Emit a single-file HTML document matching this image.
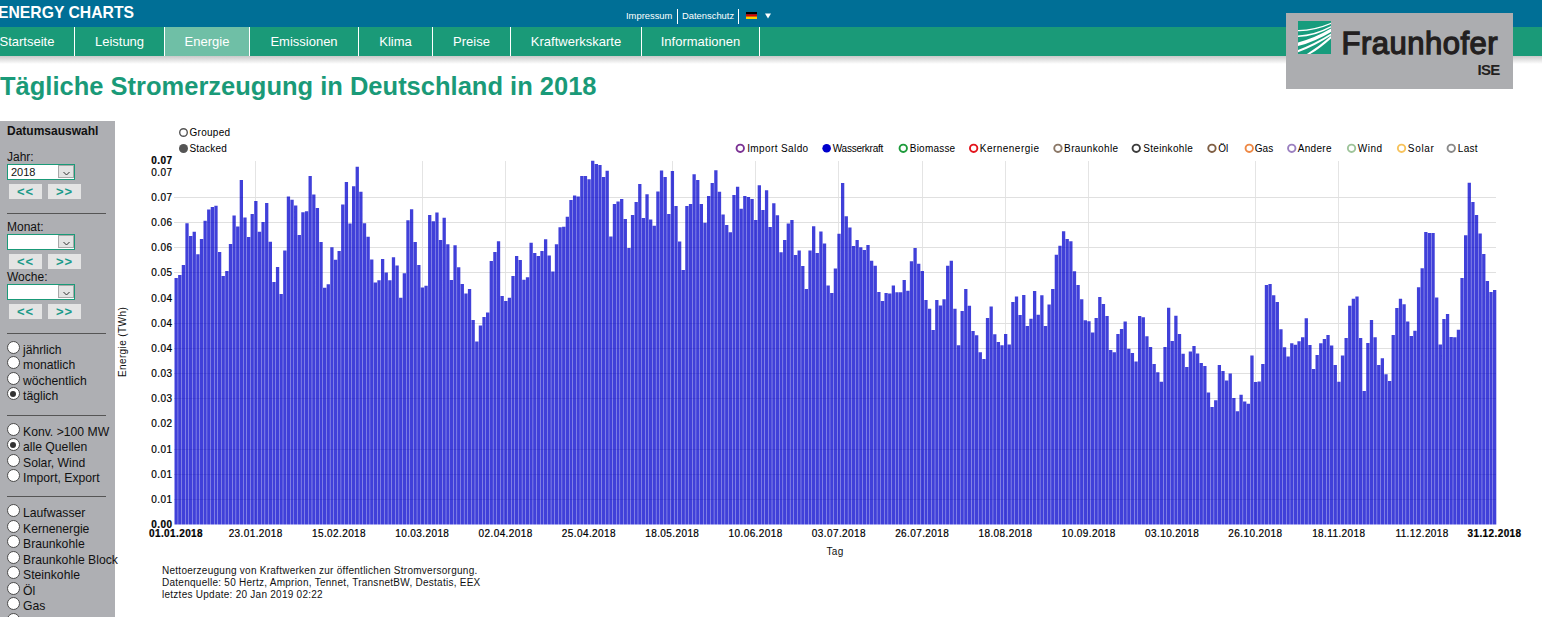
<!DOCTYPE html>
<html><head><meta charset="utf-8">
<style>
*{margin:0;padding:0;box-sizing:border-box;}
html,body{width:1542px;height:617px;overflow:hidden;background:#fff;font-family:"Liberation Sans",sans-serif;}
#top{position:absolute;left:0;top:0;width:1542px;height:27px;background:#006f96;}
#brand{position:absolute;left:-1.8px;top:3px;color:#fff;font-weight:bold;font-size:17px;letter-spacing:0px;transform:scaleX(0.925);transform-origin:0 0;line-height:20px;white-space:nowrap;}
.tl{position:absolute;top:10px;color:#fff;font-size:9.4px;line-height:12px;white-space:nowrap;}
.tsep{position:absolute;top:9px;width:1px;height:15px;background:#fff;}
#nav{position:absolute;left:0;top:27px;width:1542px;height:29px;background:#1a9a78;}
#shadow{position:absolute;left:0;top:56px;width:1542px;height:8px;background:linear-gradient(#c9c9c9,#fff);}
.ni{position:absolute;top:0;height:29px;color:#fff;font-size:13px;line-height:29px;text-align:center;white-space:nowrap;}
.ns{position:absolute;top:0;width:1px;height:29px;background:#fff;}
#logo{position:absolute;left:1286px;top:13px;width:227px;height:76px;background:#acadb0;}
#title{position:absolute;left:0;top:71px;color:#1a9a78;font-weight:bold;font-size:25.5px;line-height:30px;white-space:nowrap;}
#side{position:absolute;left:0;top:121px;width:115px;height:500px;background:#aeafb3;}
.st{position:absolute;left:7px;color:#111;font-size:12px;line-height:14px;white-space:nowrap;}
.sel{position:absolute;left:7px;width:68px;height:16px;background:#fff;border:1.3px solid #1a9a78;}
.sv{position:absolute;left:3px;top:1px;font-size:11px;line-height:13px;color:#111;}
.sbtn{position:absolute;right:0px;top:0.3px;width:16.5px;height:13px;background:#e3e3e3;border:1px solid #a8a8a8;}
.sbtn svg{position:absolute;left:0;top:0;}
.bt{position:absolute;width:33px;height:15px;background:#e4e4e4;color:#1a9a8a;font-size:13px;font-weight:bold;line-height:15px;text-align:center;letter-spacing:1px;}
.hr{position:absolute;left:7px;width:99px;height:1px;background:#555;}
.rb{position:absolute;left:7px;width:13px;height:13px;border-radius:50%;background:#fff;border:1.2px solid #4a4a4a;}
.dot{position:absolute;left:2.3px;top:2.3px;width:6.2px;height:6.2px;border-radius:50%;background:#333;}
.rt{position:absolute;left:23px;color:#111;font-size:12.2px;line-height:14px;white-space:nowrap;}
.yl{position:absolute;left:121px;width:51.4px;text-align:right;letter-spacing:0.4px;font-size:10px;line-height:12px;color:#000;-webkit-text-stroke:0.2px #000;}
.xl{position:absolute;top:527.5px;width:80px;text-align:center;letter-spacing:0.4px;font-size:10px;line-height:12px;color:#000;-webkit-text-stroke:0.2px #000;}
.lg{position:absolute;top:143px;font-size:10px;line-height:12px;color:#000;white-space:nowrap;}
.ft{position:absolute;left:162px;letter-spacing:0.26px;font-size:10px;line-height:12px;color:#111;white-space:nowrap;}
</style></head><body>
<div id="top">
<div id="brand">ENERGY CHARTS</div>
<div class="tl" style="left:626px;">Impressum</div>
<div class="tsep" style="left:677px;"></div>
<div class="tl" style="left:682px;">Datenschutz</div>
<div class="tsep" style="left:738px;"></div>
<svg style="position:absolute;left:746px;top:12px;" width="11" height="7"><rect width="11" height="2.4" fill="#000"/><rect y="2.3" width="11" height="2.4" fill="#dd0000"/><rect y="4.6" width="11" height="2.4" fill="#ffce00"/></svg>
<svg style="position:absolute;left:764px;top:12px;" width="8" height="7"><path d="M1 1.5h6l-3 5z" fill="#fff"/></svg>
</div>
<div id="nav"><div class="ni" style="left:-20px;width:94px;">Startseite</div><div class="ns" style="left:74px;"></div><div class="ni" style="left:75px;width:89px;">Leistung</div><div class="ns" style="left:164px;"></div><div class="ni" style="left:165px;width:84px;background:#6fbfa6;">Energie</div><div class="ns" style="left:249px;"></div><div class="ni" style="left:250px;width:108px;">Emissionen</div><div class="ns" style="left:358px;"></div><div class="ni" style="left:359px;width:73px;">Klima</div><div class="ns" style="left:432px;"></div><div class="ni" style="left:433px;width:77px;">Preise</div><div class="ns" style="left:510px;"></div><div class="ni" style="left:511px;width:130px;">Kraftwerkskarte</div><div class="ns" style="left:641px;"></div><div class="ni" style="left:642px;width:117px;">Informationen</div><div class="ns" style="left:759px;"></div></div>
<div id="shadow"></div>
<div id="logo">
<svg style="position:absolute;left:12px;top:8px;" width="33" height="33" viewBox="0 0 33 33">
<rect width="33" height="33" fill="#179c7d"/>
<path d="M0 8.9 Q16 9 33 1.8 L33 3.1 Q16 10.5 0 10.2Z M0 14.6 Q17 13.5 33 5 L33 6.5 Q17 15.5 0 16.1Z M0 21.6 Q17 17 33 7.6 L33 10.9 Q17 20.5 0 25.1Z M0 29 Q17 22.5 33 12.5 L33 14.5 Q17 25 0 31.3Z M8.9 33 Q21 25.5 33 15.1 L33 17.4 Q22 27.5 12.2 33Z" fill="#fff"/>
</svg>
<div style="position:absolute;left:55.5px;top:12.5px;font-size:31px;font-weight:normal;-webkit-text-stroke:1.3px #231f20;color:#231f20;line-height:36px;letter-spacing:0.5px;">Fraunhofer</div>
<div style="position:absolute;left:191.5px;top:48px;font-size:15px;font-weight:bold;color:#231f20;line-height:18px;letter-spacing:-0.7px;">ISE</div>
</div>
<div id="title">Tägliche Stromerzeugung in Deutschland in 2018</div>
<div id="side">
<div class="st" style="top:3px;font-weight:bold;">Datumsauswahl</div>
<div class="st" style="top:29px;">Jahr:</div>
</div>
<div style="position:absolute;left:0;top:0;">
<div class="sel" style="top:164px;"><span class="sv">2018</span><div class="sbtn"><svg width="15" height="11" viewBox="0 0 15 11"><path d="M4.5 6l3 3 3-3" fill="none" stroke="#333" stroke-width="1"/></svg></div></div><div class="bt" style="top:184px;left:9px;">&lt;&lt;</div><div class="bt" style="top:184px;left:48px;">&gt;&gt;</div>
<div class="hr" style="top:213px;"></div>
<div class="st" style="top:219.8px;">Monat:</div>
<div class="sel" style="top:234px;"><span class="sv"></span><div class="sbtn"><svg width="15" height="11" viewBox="0 0 15 11"><path d="M4.5 6l3 3 3-3" fill="none" stroke="#333" stroke-width="1"/></svg></div></div><div class="bt" style="top:254px;left:9px;">&lt;&lt;</div><div class="bt" style="top:254px;left:48px;">&gt;&gt;</div>
<div class="st" style="top:269.8px;">Woche:</div>
<div class="sel" style="top:284px;"><span class="sv"></span><div class="sbtn"><svg width="15" height="11" viewBox="0 0 15 11"><path d="M4.5 6l3 3 3-3" fill="none" stroke="#333" stroke-width="1"/></svg></div></div><div class="bt" style="top:304px;left:9px;">&lt;&lt;</div><div class="bt" style="top:304px;left:48px;">&gt;&gt;</div>
<div class="hr" style="top:333px;"></div>
<div class="hr" style="top:415px;"></div>
<div class="hr" style="top:496px;"></div>
<div class="rb" style="top:341.0px;"></div><div class="rt" style="top:343.0px;">jährlich</div><div class="rb" style="top:356.4px;"></div><div class="rt" style="top:358.4px;">monatlich</div><div class="rb" style="top:371.9px;"></div><div class="rt" style="top:373.9px;">wöchentlich</div><div class="rb" style="top:387.4px;"><span class="dot"></span></div><div class="rt" style="top:389.4px;">täglich</div><div class="rb" style="top:422.9px;"></div><div class="rt" style="top:424.9px;">Konv. &gt;100 MW</div><div class="rb" style="top:438.3px;"><span class="dot"></span></div><div class="rt" style="top:440.3px;">alle Quellen</div><div class="rb" style="top:453.8px;"></div><div class="rt" style="top:455.8px;">Solar, Wind</div><div class="rb" style="top:469.2px;"></div><div class="rt" style="top:471.2px;">Import, Export</div><div class="rb" style="top:504.4px;"></div><div class="rt" style="top:506.4px;">Laufwasser</div><div class="rb" style="top:519.9px;"></div><div class="rt" style="top:521.9px;">Kernenergie</div><div class="rb" style="top:535.3px;"></div><div class="rt" style="top:537.3px;">Braunkohle</div><div class="rb" style="top:550.8px;"></div><div class="rt" style="top:552.8px;">Braunkohle Block</div><div class="rb" style="top:566.2px;"></div><div class="rt" style="top:568.2px;">Steinkohle</div><div class="rb" style="top:581.6px;"></div><div class="rt" style="top:583.6px;">Öl</div><div class="rb" style="top:597.1px;"></div><div class="rt" style="top:599.1px;">Gas</div><div class="rb" style="top:612.5px;"></div><div class="rt" style="top:614.5px;">Müll</div>
</div>
<svg style="position:absolute;left:0;top:0;" width="1542" height="617">
<path d="M255.5 161V524M422.5 161V524M505.5 161V524M672.5 161V524M755.5 161V524M838.5 161V524M922.5 161V524M1005.5 161V524M1088.5 161V524M1255.5 161V524M1338.5 161V524" stroke="#e4e4e4" stroke-width="1" fill="none"/>
<path d="M174.0 499.5H1496.0M174.0 474.5H1496.0M174.0 449.5H1496.0M174.0 398.5H1496.0M174.0 373.5H1496.0M174.0 348.5H1496.0M174.0 323.5H1496.0M174.0 272.5H1496.0M174.0 247.5H1496.0M174.0 222.5H1496.0M174.0 197.5H1496.0" stroke="#e0e0e0" stroke-width="1" fill="none"/>
<path d="M174.50 278.0h3.30V524.5h-3.30zM178.12 275.0h3.30V524.5h-3.30zM181.74 265.0h3.30V524.5h-3.30zM185.37 223.3h3.30V524.5h-3.30zM188.99 236.1h3.30V524.5h-3.30zM192.61 231.7h3.30V524.5h-3.30zM196.23 254.3h3.30V524.5h-3.30zM199.86 239.0h3.30V524.5h-3.30zM203.48 220.7h3.30V524.5h-3.30zM207.10 209.5h3.30V524.5h-3.30zM210.72 207.1h3.30V524.5h-3.30zM214.34 205.7h3.30V524.5h-3.30zM217.97 252.0h3.30V524.5h-3.30zM221.59 276.0h3.30V524.5h-3.30zM225.21 271.1h3.30V524.5h-3.30zM228.83 244.0h3.30V524.5h-3.30zM232.46 215.4h3.30V524.5h-3.30zM236.08 226.5h3.30V524.5h-3.30zM239.70 180.1h3.30V524.5h-3.30zM243.32 217.5h3.30V524.5h-3.30zM246.95 236.9h3.30V524.5h-3.30zM250.57 214.0h3.30V524.5h-3.30zM254.19 200.9h3.30V524.5h-3.30zM257.81 231.7h3.30V524.5h-3.30zM261.43 222.0h3.30V524.5h-3.30zM265.06 203.1h3.30V524.5h-3.30zM268.68 241.7h3.30V524.5h-3.30zM272.30 281.9h3.30V524.5h-3.30zM275.92 267.0h3.30V524.5h-3.30zM279.55 294.0h3.30V524.5h-3.30zM283.17 250.5h3.30V524.5h-3.30zM286.79 196.6h3.30V524.5h-3.30zM290.41 199.7h3.30V524.5h-3.30zM294.03 205.5h3.30V524.5h-3.30zM297.66 235.0h3.30V524.5h-3.30zM301.28 212.3h3.30V524.5h-3.30zM304.90 211.2h3.30V524.5h-3.30zM308.52 176.0h3.30V524.5h-3.30zM312.15 194.6h3.30V524.5h-3.30zM315.77 208.0h3.30V524.5h-3.30zM319.39 242.0h3.30V524.5h-3.30zM323.01 287.7h3.30V524.5h-3.30zM326.63 284.2h3.30V524.5h-3.30zM330.26 247.3h3.30V524.5h-3.30zM333.88 259.8h3.30V524.5h-3.30zM337.50 251.0h3.30V524.5h-3.30zM341.12 204.5h3.30V524.5h-3.30zM344.75 182.0h3.30V524.5h-3.30zM348.37 223.6h3.30V524.5h-3.30zM351.99 186.2h3.30V524.5h-3.30zM355.61 166.7h3.30V524.5h-3.30zM359.23 191.8h3.30V524.5h-3.30zM362.86 223.3h3.30V524.5h-3.30zM366.48 236.8h3.30V524.5h-3.30zM370.10 259.4h3.30V524.5h-3.30zM373.72 282.5h3.30V524.5h-3.30zM377.35 280.3h3.30V524.5h-3.30zM380.97 258.9h3.30V524.5h-3.30zM384.59 272.4h3.30V524.5h-3.30zM388.21 280.3h3.30V524.5h-3.30zM391.84 257.2h3.30V524.5h-3.30zM395.46 265.4h3.30V524.5h-3.30zM399.08 297.7h3.30V524.5h-3.30zM402.70 273.2h3.30V524.5h-3.30zM406.32 220.3h3.30V524.5h-3.30zM409.95 209.3h3.30V524.5h-3.30zM413.57 242.1h3.30V524.5h-3.30zM417.19 265.0h3.30V524.5h-3.30zM420.81 287.5h3.30V524.5h-3.30zM424.44 285.8h3.30V524.5h-3.30zM428.06 215.1h3.30V524.5h-3.30zM431.68 221.2h3.30V524.5h-3.30zM435.30 212.5h3.30V524.5h-3.30zM438.92 240.1h3.30V524.5h-3.30zM442.55 217.7h3.30V524.5h-3.30zM446.17 244.3h3.30V524.5h-3.30zM449.79 280.0h3.30V524.5h-3.30zM453.41 245.3h3.30V524.5h-3.30zM457.04 267.2h3.30V524.5h-3.30zM460.66 284.1h3.30V524.5h-3.30zM464.28 293.6h3.30V524.5h-3.30zM467.90 289.0h3.30V524.5h-3.30zM471.52 320.1h3.30V524.5h-3.30zM475.15 341.5h3.30V524.5h-3.30zM478.77 325.6h3.30V524.5h-3.30zM482.39 316.9h3.30V524.5h-3.30zM486.01 312.6h3.30V524.5h-3.30zM489.64 261.1h3.30V524.5h-3.30zM493.26 252.0h3.30V524.5h-3.30zM496.88 241.3h3.30V524.5h-3.30zM500.50 296.1h3.30V524.5h-3.30zM504.12 301.1h3.30V524.5h-3.30zM507.75 297.7h3.30V524.5h-3.30zM511.37 276.0h3.30V524.5h-3.30zM514.99 255.9h3.30V524.5h-3.30zM518.61 260.1h3.30V524.5h-3.30zM522.24 279.7h3.30V524.5h-3.30zM525.86 277.3h3.30V524.5h-3.30zM529.48 242.7h3.30V524.5h-3.30zM533.10 253.1h3.30V524.5h-3.30zM536.73 255.9h3.30V524.5h-3.30zM540.35 251.0h3.30V524.5h-3.30zM543.97 239.3h3.30V524.5h-3.30zM547.59 255.5h3.30V524.5h-3.30zM551.21 271.5h3.30V524.5h-3.30zM554.84 244.3h3.30V524.5h-3.30zM558.46 227.2h3.30V524.5h-3.30zM562.08 226.8h3.30V524.5h-3.30zM565.70 216.8h3.30V524.5h-3.30zM569.33 200.0h3.30V524.5h-3.30zM572.95 195.5h3.30V524.5h-3.30zM576.57 196.5h3.30V524.5h-3.30zM580.19 176.0h3.30V524.5h-3.30zM583.81 176.0h3.30V524.5h-3.30zM587.44 179.3h3.30V524.5h-3.30zM591.06 160.8h3.30V524.5h-3.30zM594.68 164.1h3.30V524.5h-3.30zM598.30 165.0h3.30V524.5h-3.30zM601.93 177.0h3.30V524.5h-3.30zM605.55 170.8h3.30V524.5h-3.30zM609.17 236.4h3.30V524.5h-3.30zM612.79 204.0h3.30V524.5h-3.30zM616.41 201.4h3.30V524.5h-3.30zM620.04 199.1h3.30V524.5h-3.30zM623.66 219.0h3.30V524.5h-3.30zM627.28 248.1h3.30V524.5h-3.30zM630.90 214.9h3.30V524.5h-3.30zM634.53 202.0h3.30V524.5h-3.30zM638.15 183.9h3.30V524.5h-3.30zM641.77 217.9h3.30V524.5h-3.30zM645.39 194.2h3.30V524.5h-3.30zM649.02 219.6h3.30V524.5h-3.30zM652.64 225.7h3.30V524.5h-3.30zM656.26 191.6h3.30V524.5h-3.30zM659.88 170.6h3.30V524.5h-3.30zM663.50 177.0h3.30V524.5h-3.30zM667.13 214.0h3.30V524.5h-3.30zM670.75 171.0h3.30V524.5h-3.30zM674.37 206.0h3.30V524.5h-3.30zM677.99 241.5h3.30V524.5h-3.30zM681.62 270.1h3.30V524.5h-3.30zM685.24 206.0h3.30V524.5h-3.30zM688.86 204.0h3.30V524.5h-3.30zM692.48 174.2h3.30V524.5h-3.30zM696.10 179.9h3.30V524.5h-3.30zM699.73 204.0h3.30V524.5h-3.30zM703.35 222.8h3.30V524.5h-3.30zM706.97 195.9h3.30V524.5h-3.30zM710.59 182.9h3.30V524.5h-3.30zM714.22 170.3h3.30V524.5h-3.30zM717.84 191.7h3.30V524.5h-3.30zM721.46 214.4h3.30V524.5h-3.30zM725.08 225.0h3.30V524.5h-3.30zM728.70 232.2h3.30V524.5h-3.30zM732.33 195.0h3.30V524.5h-3.30zM735.95 186.8h3.30V524.5h-3.30zM739.57 208.8h3.30V524.5h-3.30zM743.19 196.1h3.30V524.5h-3.30zM746.82 196.9h3.30V524.5h-3.30zM750.44 199.1h3.30V524.5h-3.30zM754.06 219.9h3.30V524.5h-3.30zM757.68 185.2h3.30V524.5h-3.30zM761.30 209.9h3.30V524.5h-3.30zM764.93 190.3h3.30V524.5h-3.30zM768.55 227.0h3.30V524.5h-3.30zM772.17 203.3h3.30V524.5h-3.30zM775.79 215.2h3.30V524.5h-3.30zM779.42 252.3h3.30V524.5h-3.30zM783.04 239.9h3.30V524.5h-3.30zM786.66 223.6h3.30V524.5h-3.30zM790.28 220.1h3.30V524.5h-3.30zM793.91 255.0h3.30V524.5h-3.30zM797.53 250.5h3.30V524.5h-3.30zM801.15 266.0h3.30V524.5h-3.30zM804.77 289.1h3.30V524.5h-3.30zM808.39 250.5h3.30V524.5h-3.30zM812.02 226.2h3.30V524.5h-3.30zM815.64 252.9h3.30V524.5h-3.30zM819.26 231.4h3.30V524.5h-3.30zM822.88 243.5h3.30V524.5h-3.30zM826.51 285.5h3.30V524.5h-3.30zM830.13 293.0h3.30V524.5h-3.30zM833.75 268.6h3.30V524.5h-3.30zM837.37 233.8h3.30V524.5h-3.30zM840.99 183.0h3.30V524.5h-3.30zM844.62 216.2h3.30V524.5h-3.30zM848.24 227.5h3.30V524.5h-3.30zM851.86 246.0h3.30V524.5h-3.30zM855.48 240.1h3.30V524.5h-3.30zM859.11 247.2h3.30V524.5h-3.30zM862.73 250.1h3.30V524.5h-3.30zM866.35 244.9h3.30V524.5h-3.30zM869.97 260.8h3.30V524.5h-3.30zM873.59 265.8h3.30V524.5h-3.30zM877.22 292.1h3.30V524.5h-3.30zM880.84 301.0h3.30V524.5h-3.30zM884.46 293.0h3.30V524.5h-3.30zM888.08 293.6h3.30V524.5h-3.30zM891.71 285.5h3.30V524.5h-3.30zM895.33 292.3h3.30V524.5h-3.30zM898.95 292.3h3.30V524.5h-3.30zM902.57 280.0h3.30V524.5h-3.30zM906.20 290.7h3.30V524.5h-3.30zM909.82 261.2h3.30V524.5h-3.30zM913.44 247.9h3.30V524.5h-3.30zM917.06 263.8h3.30V524.5h-3.30zM920.68 271.0h3.30V524.5h-3.30zM924.31 300.1h3.30V524.5h-3.30zM927.93 308.8h3.30V524.5h-3.30zM931.55 330.0h3.30V524.5h-3.30zM935.17 300.1h3.30V524.5h-3.30zM938.80 305.4h3.30V524.5h-3.30zM942.42 299.2h3.30V524.5h-3.30zM946.04 265.8h3.30V524.5h-3.30zM949.66 260.8h3.30V524.5h-3.30zM953.28 308.8h3.30V524.5h-3.30zM956.91 345.3h3.30V524.5h-3.30zM960.53 311.1h3.30V524.5h-3.30zM964.15 289.1h3.30V524.5h-3.30zM967.77 305.7h3.30V524.5h-3.30zM971.40 331.1h3.30V524.5h-3.30zM975.02 335.2h3.30V524.5h-3.30zM978.64 352.3h3.30V524.5h-3.30zM982.26 358.9h3.30V524.5h-3.30zM985.88 318.0h3.30V524.5h-3.30zM989.51 306.4h3.30V524.5h-3.30zM993.13 334.3h3.30V524.5h-3.30zM996.75 342.1h3.30V524.5h-3.30zM1000.37 345.3h3.30V524.5h-3.30zM1004.00 333.9h3.30V524.5h-3.30zM1007.62 344.5h3.30V524.5h-3.30zM1011.24 302.1h3.30V524.5h-3.30zM1014.86 296.4h3.30V524.5h-3.30zM1018.48 315.1h3.30V524.5h-3.30zM1022.11 295.0h3.30V524.5h-3.30zM1025.73 326.1h3.30V524.5h-3.30zM1029.35 318.7h3.30V524.5h-3.30zM1032.97 291.1h3.30V524.5h-3.30zM1036.60 314.7h3.30V524.5h-3.30zM1040.22 295.3h3.30V524.5h-3.30zM1043.84 326.1h3.30V524.5h-3.30zM1047.46 304.5h3.30V524.5h-3.30zM1051.09 289.0h3.30V524.5h-3.30zM1054.71 254.8h3.30V524.5h-3.30zM1058.33 245.8h3.30V524.5h-3.30zM1061.95 231.2h3.30V524.5h-3.30zM1065.57 239.0h3.30V524.5h-3.30zM1069.20 241.2h3.30V524.5h-3.30zM1072.82 271.3h3.30V524.5h-3.30zM1076.44 285.0h3.30V524.5h-3.30zM1080.06 299.2h3.30V524.5h-3.30zM1083.69 320.3h3.30V524.5h-3.30zM1087.31 321.2h3.30V524.5h-3.30zM1090.93 332.6h3.30V524.5h-3.30zM1094.55 318.1h3.30V524.5h-3.30zM1098.17 297.0h3.30V524.5h-3.30zM1101.80 304.0h3.30V524.5h-3.30zM1105.42 316.0h3.30V524.5h-3.30zM1109.04 350.1h3.30V524.5h-3.30zM1112.66 352.3h3.30V524.5h-3.30zM1116.29 333.9h3.30V524.5h-3.30zM1119.91 329.0h3.30V524.5h-3.30zM1123.53 321.6h3.30V524.5h-3.30zM1127.15 348.8h3.30V524.5h-3.30zM1130.77 353.0h3.30V524.5h-3.30zM1134.40 361.5h3.30V524.5h-3.30zM1138.02 316.1h3.30V524.5h-3.30zM1141.64 317.3h3.30V524.5h-3.30zM1145.26 336.2h3.30V524.5h-3.30zM1148.89 346.9h3.30V524.5h-3.30zM1152.51 364.1h3.30V524.5h-3.30zM1156.13 372.2h3.30V524.5h-3.30zM1159.75 381.8h3.30V524.5h-3.30zM1163.38 346.9h3.30V524.5h-3.30zM1167.00 307.8h3.30V524.5h-3.30zM1170.62 340.9h3.30V524.5h-3.30zM1174.24 315.8h3.30V524.5h-3.30zM1177.86 334.0h3.30V524.5h-3.30zM1181.49 353.8h3.30V524.5h-3.30zM1185.11 366.9h3.30V524.5h-3.30zM1188.73 351.5h3.30V524.5h-3.30zM1192.35 346.0h3.30V524.5h-3.30zM1195.98 353.6h3.30V524.5h-3.30zM1199.60 362.9h3.30V524.5h-3.30zM1203.22 366.1h3.30V524.5h-3.30zM1206.84 392.4h3.30V524.5h-3.30zM1210.46 407.0h3.30V524.5h-3.30zM1214.09 400.2h3.30V524.5h-3.30zM1217.71 364.9h3.30V524.5h-3.30zM1221.33 370.9h3.30V524.5h-3.30zM1224.95 380.4h3.30V524.5h-3.30zM1228.58 373.6h3.30V524.5h-3.30zM1232.20 397.9h3.30V524.5h-3.30zM1235.82 411.2h3.30V524.5h-3.30zM1239.44 394.8h3.30V524.5h-3.30zM1243.06 401.5h3.30V524.5h-3.30zM1246.69 403.8h3.30V524.5h-3.30zM1250.31 355.4h3.30V524.5h-3.30zM1253.93 382.0h3.30V524.5h-3.30zM1257.55 381.4h3.30V524.5h-3.30zM1261.18 364.0h3.30V524.5h-3.30zM1264.80 284.9h3.30V524.5h-3.30zM1268.42 284.0h3.30V524.5h-3.30zM1272.04 295.3h3.30V524.5h-3.30zM1275.66 302.0h3.30V524.5h-3.30zM1279.29 329.2h3.30V524.5h-3.30zM1282.91 347.3h3.30V524.5h-3.30zM1286.53 356.4h3.30V524.5h-3.30zM1290.15 343.2h3.30V524.5h-3.30zM1293.78 344.7h3.30V524.5h-3.30zM1297.40 341.2h3.30V524.5h-3.30zM1301.02 337.2h3.30V524.5h-3.30zM1304.64 318.2h3.30V524.5h-3.30zM1308.27 345.1h3.30V524.5h-3.30zM1311.89 369.1h3.30V524.5h-3.30zM1315.51 355.1h3.30V524.5h-3.30zM1319.13 343.2h3.30V524.5h-3.30zM1322.75 338.9h3.30V524.5h-3.30zM1326.38 335.0h3.30V524.5h-3.30zM1330.00 345.4h3.30V524.5h-3.30zM1333.62 365.0h3.30V524.5h-3.30zM1337.24 381.8h3.30V524.5h-3.30zM1340.87 355.4h3.30V524.5h-3.30zM1344.49 337.9h3.30V524.5h-3.30zM1348.11 305.8h3.30V524.5h-3.30zM1351.73 298.8h3.30V524.5h-3.30zM1355.35 296.6h3.30V524.5h-3.30zM1358.98 337.9h3.30V524.5h-3.30zM1362.60 390.9h3.30V524.5h-3.30zM1366.22 343.1h3.30V524.5h-3.30zM1369.84 320.1h3.30V524.5h-3.30zM1373.47 337.2h3.30V524.5h-3.30zM1377.09 365.1h3.30V524.5h-3.30zM1380.71 358.2h3.30V524.5h-3.30zM1384.33 374.2h3.30V524.5h-3.30zM1387.95 381.1h3.30V524.5h-3.30zM1391.58 335.0h3.30V524.5h-3.30zM1395.20 307.9h3.30V524.5h-3.30zM1398.82 298.8h3.30V524.5h-3.30zM1402.44 304.3h3.30V524.5h-3.30zM1406.07 321.4h3.30V524.5h-3.30zM1409.69 335.9h3.30V524.5h-3.30zM1413.31 330.8h3.30V524.5h-3.30zM1416.93 287.2h3.30V524.5h-3.30zM1420.55 268.3h3.30V524.5h-3.30zM1424.18 232.1h3.30V524.5h-3.30zM1427.80 233.0h3.30V524.5h-3.30zM1431.42 233.0h3.30V524.5h-3.30zM1435.04 297.5h3.30V524.5h-3.30zM1438.67 344.4h3.30V524.5h-3.30zM1442.29 319.1h3.30V524.5h-3.30zM1445.91 313.9h3.30V524.5h-3.30zM1449.53 337.0h3.30V524.5h-3.30zM1453.16 337.2h3.30V524.5h-3.30zM1456.78 329.7h3.30V524.5h-3.30zM1460.40 278.1h3.30V524.5h-3.30zM1464.02 235.3h3.30V524.5h-3.30zM1467.64 182.8h3.30V524.5h-3.30zM1471.27 202.0h3.30V524.5h-3.30zM1474.89 215.0h3.30V524.5h-3.30zM1478.51 233.6h3.30V524.5h-3.30zM1482.13 254.1h3.30V524.5h-3.30zM1485.76 281.1h3.30V524.5h-3.30zM1489.38 292.0h3.30V524.5h-3.30zM1493.00 290.0h3.30V524.5h-3.30z" fill="rgba(0,0,204,0.75)"/>
<circle cx="183.5" cy="132.5" r="3.8" fill="#fff" stroke="#555" stroke-width="1.4"/>
<circle cx="183.5" cy="148.5" r="4.5" fill="#555"/>
<circle cx="740.25" cy="148.3" r="3.7" fill="#fff" stroke="#7b3294" stroke-width="1.9"/><circle cx="826.65" cy="148.3" r="4.3" fill="#0000cc"/><circle cx="903.25" cy="148.3" r="3.7" fill="#fff" stroke="#1c9a3a" stroke-width="1.9"/><circle cx="973.65" cy="148.3" r="3.7" fill="#fff" stroke="#e3141c" stroke-width="1.9"/><circle cx="1057.95" cy="148.3" r="3.7" fill="#fff" stroke="#8b7766" stroke-width="1.9"/><circle cx="1136.25" cy="148.3" r="3.7" fill="#fff" stroke="#3c3c3c" stroke-width="1.9"/><circle cx="1211.95" cy="148.3" r="3.7" fill="#fff" stroke="#7f5f44" stroke-width="1.9"/><circle cx="1249.25" cy="148.3" r="3.7" fill="#fff" stroke="#ee8844" stroke-width="1.9"/><circle cx="1291.75" cy="148.3" r="3.7" fill="#fff" stroke="#9b80c0" stroke-width="1.9"/><circle cx="1351.55" cy="148.3" r="3.7" fill="#fff" stroke="#9ec49a" stroke-width="1.9"/><circle cx="1401.55" cy="148.3" r="3.7" fill="#fff" stroke="#f7c35c" stroke-width="1.9"/><circle cx="1451.25" cy="148.3" r="3.7" fill="#fff" stroke="#8a8a8a" stroke-width="1.9"/>
</svg>
<div class="lg" style="left:189.5px;top:127px;letter-spacing:0.28px;">Grouped</div>
<div class="lg" style="left:189.5px;top:143px;letter-spacing:0.2px;">Stacked</div>
<div class="lg" style="left:747.1999999999999px;letter-spacing:0.39px;">Import Saldo</div><div class="lg" style="left:832.8px;letter-spacing:-0.25px;">Wasserkraft</div><div class="lg" style="left:909.8px;letter-spacing:0.21px;">Biomasse</div><div class="lg" style="left:979.8px;letter-spacing:0.47px;">Kernenergie</div><div class="lg" style="left:1064.1px;letter-spacing:0.38px;">Braunkohle</div><div class="lg" style="left:1143.2px;letter-spacing:0.32px;">Steinkohle</div><div class="lg" style="left:1218.2px;letter-spacing:0.0px;">Öl</div><div class="lg" style="left:1254.8px;letter-spacing:0.0px;">Gas</div><div class="lg" style="left:1297.8px;letter-spacing:0.28px;">Andere</div><div class="lg" style="left:1357.8px;letter-spacing:0.47px;">Wind</div><div class="lg" style="left:1407.8px;letter-spacing:0.7px;">Solar</div><div class="lg" style="left:1457.8px;letter-spacing:0.27px;">Last</div>
<div class="yl" style="top:519.1px; font-weight:bold;">0.00</div><div class="yl" style="top:493.9px;">0.01</div><div class="yl" style="top:468.7px;">0.01</div><div class="yl" style="top:443.6px;">0.01</div><div class="yl" style="top:418.4px;">0.02</div><div class="yl" style="top:393.2px;">0.03</div><div class="yl" style="top:368.0px;">0.03</div><div class="yl" style="top:342.8px;">0.04</div><div class="yl" style="top:317.7px;">0.04</div><div class="yl" style="top:292.5px;">0.04</div><div class="yl" style="top:267.3px;">0.05</div><div class="yl" style="top:242.1px;">0.06</div><div class="yl" style="top:216.9px;">0.06</div><div class="yl" style="top:191.8px;">0.07</div><div class="yl" style="top:166.6px;">0.07</div><div class="yl" style="top:154.6px;font-weight:bold;">0.07</div>
<div class="xl" style="left:136.0px;font-weight:bold;">01.01.2018</div><div class="xl" style="left:215.7px;">23.01.2018</div><div class="xl" style="left:299.0px;">15.02.2018</div><div class="xl" style="left:382.3px;">10.03.2018</div><div class="xl" style="left:465.6px;">02.04.2018</div><div class="xl" style="left:548.9px;">25.04.2018</div><div class="xl" style="left:632.3px;">18.05.2018</div><div class="xl" style="left:715.6px;">10.06.2018</div><div class="xl" style="left:798.9px;">03.07.2018</div><div class="xl" style="left:882.2px;">26.07.2018</div><div class="xl" style="left:965.5px;">18.08.2018</div><div class="xl" style="left:1048.8px;">10.09.2018</div><div class="xl" style="left:1132.1px;">03.10.2018</div><div class="xl" style="left:1215.4px;">26.10.2018</div><div class="xl" style="left:1298.8px;">18.11.2018</div><div class="xl" style="left:1382.1px;">11.12.2018</div><div class="xl" style="left:1454.5px;font-weight:bold;">31.12.2018</div>
<div style="position:absolute;left:123px;top:342px;width:0;height:0;">
<div style="position:absolute;left:-40px;top:-6px;width:80px;text-align:center;font-size:10px;letter-spacing:0.4px;line-height:12px;color:#111;transform:rotate(-90deg);">Energie (TWh)</div>
</div>
<div style="position:absolute;left:815px;top:545.5px;width:40px;text-align:center;letter-spacing:0.3px;font-size:10px;line-height:12px;color:#111;">Tag</div>
<div class="ft" style="top:564.5px;">Nettoerzeugung von Kraftwerken zur öffentlichen Stromversorgung.</div>
<div class="ft" style="top:576.7px;">Datenquelle: 50 Hertz, Amprion, Tennet, TransnetBW, Destatis, EEX</div>
<div class="ft" style="top:588.9px;">letztes Update: 20 Jan 2019 02:22</div>
</body></html>
